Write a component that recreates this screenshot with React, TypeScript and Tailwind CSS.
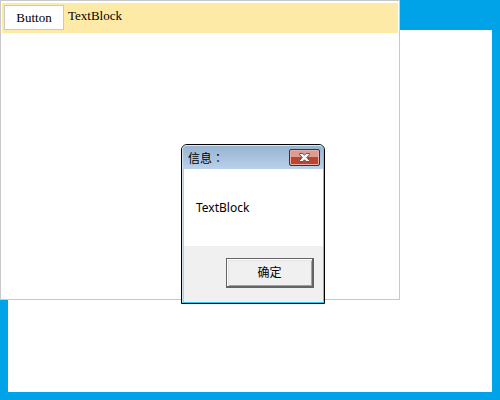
function CloseIcon() {
  return (
    <svg viewBox="0 0 13 11" className="h-[11px] w-[13px]" aria-hidden="true">
      <path
        d="M1.5 1.5H4.8L6.5 3.2L8.2 1.5H11.5V2.5L8.8 5.5L11.5 8.5V9.5H8.2L6.5 7.8L4.8 9.5H1.5V8.5L4.2 5.5L1.5 2.5Z"
        fill="#f7f7f7"
        stroke="#535666"
        strokeWidth="1"
        strokeLinejoin="round"
      />
    </svg>
  );
}

function MessageBox() {
  return (
    <div
      role="dialog"
      aria-labelledby="message-title"
      className="absolute left-[181px] top-36 w-36 rounded-t-md border border-black bg-[#b4cbe6] font-['Noto_Sans','Noto_Sans_CJK_SC',sans-serif] text-xs text-black"
    >
      <div className="rounded-t-[5px] border border-t-[#dfeaf5] border-r-[#42d3ee] border-b-[#2ccbed] border-l-[#d5e2f1]">
        <header className="flex h-[23px] items-center justify-between rounded-t-sm bg-linear-to-b from-[#98b4d2] to-[#b9d1ea] pr-[3px] pl-[5px]">
          <h1 id="message-title" className="font-['Noto_Sans_CJK_TC',sans-serif]">
            信息：
          </h1>
          <button
            type="button"
            aria-label="关闭"
            className="flex h-[17px] w-[31px] items-center justify-center rounded-xs border border-[#5b2524] bg-linear-to-b from-[#dc9c8f] from-45% to-[#bd452f] to-50% shadow-[inset_0_0_0_1px_#e6b1a6]"
          >
            <CloseIcon />
          </button>
        </header>
        <div className="ml-px">
          <p className="flex h-[77px] items-center bg-white px-3">TextBlock</p>
          <footer className="flex h-14 justify-end bg-[#f0f0f0] pt-3 pr-[9px]">
            <button
              type="button"
              className="h-[30px] w-[88px] border border-r-2 border-b-2 border-[#646464] bg-[#f0f0f0] shadow-[inset_1px_1px_0_#ffffff,inset_2px_2px_0_#e3e3e3,inset_-1px_-1px_0_#a0a0a0]"
            >
              确定
            </button>
          </footer>
        </div>
      </div>
    </div>
  );
}

export default function App() {
  return (
    <main className="relative flex min-h-screen w-full bg-[#00a2e8] px-2 pt-[30px] pb-2">
      <div className="flex-1 bg-white" />
      <section className="absolute top-0 left-0 h-3/4 w-4/5 border border-[#c8c8c8] bg-white px-px pt-0.5 font-['Liberation_Serif',serif] text-[13px] text-black">
        <div className="flex h-[30px] items-start gap-1 bg-[#fdeaa7] p-0.5">
          <button type="button" className="h-[25px] w-[60px] border border-[#c8c8c8] bg-white leading-none">
            Button
          </button>
          <span className="pt-1 leading-none">TextBlock</span>
        </div>
      </section>
      <MessageBox />
    </main>
  );
}
